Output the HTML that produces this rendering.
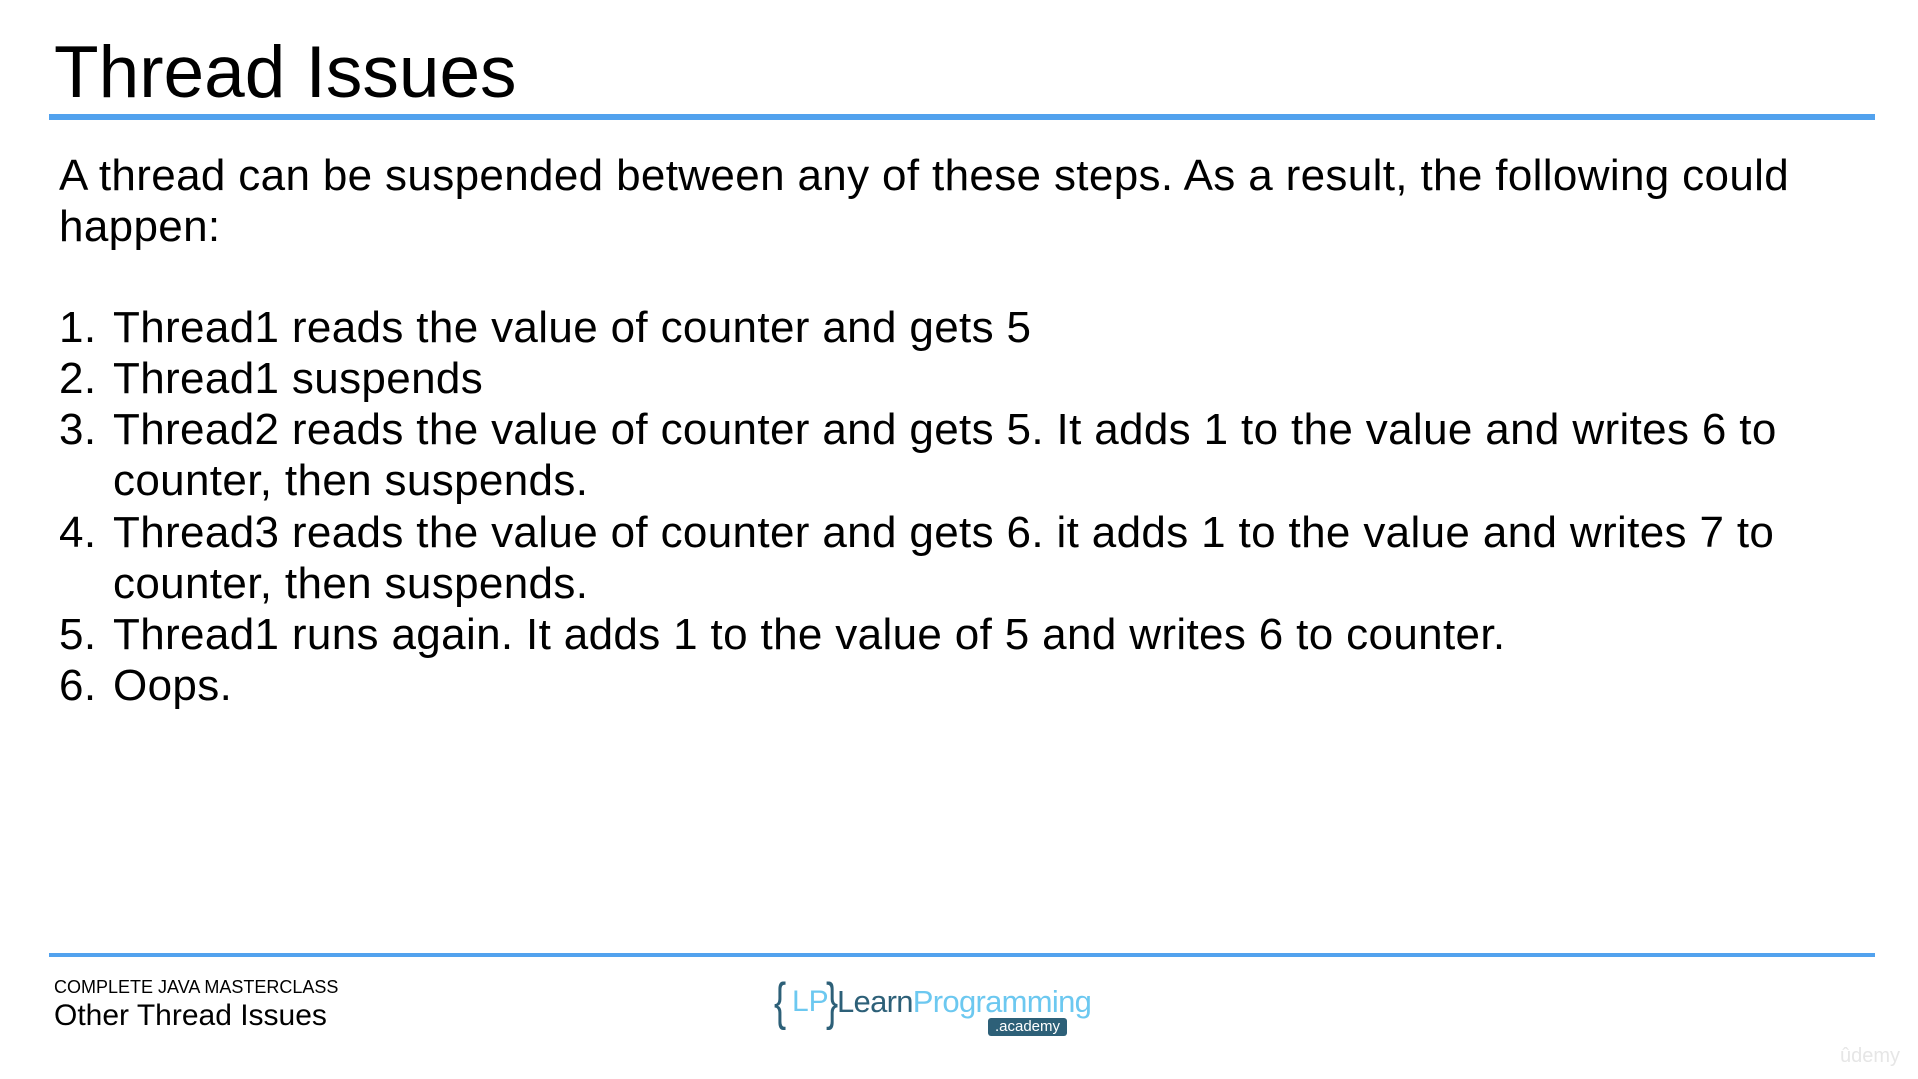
<!DOCTYPE html>
<html><head><meta charset="utf-8"><style>
html,body{margin:0;padding:0;background:#fff;}
body{width:1918px;height:1079px;position:relative;overflow:hidden;font-family:"Liberation Sans",sans-serif;color:#000;}
.a{position:absolute;white-space:nowrap;}
.line{line-height:51px;font-size:44px;letter-spacing:0.35px;}
</style></head><body>
<div class="a" style="left:54px;top:25px;font-size:73px;line-height:96px;">Thread Issues</div>
<div class="a" style="left:49px;top:114px;width:1826px;height:6px;background:#52a2ee;"></div>

<div class="a line" style="left:59px;top:150px;">A thread can be suspended between any of these steps. As a result, the following could</div>
<div class="a line" style="left:59px;top:201px;">happen:</div>

<div class="a line" style="left:59px;top:302px;">1.</div><div class="a line" style="left:113px;top:302px;">Thread1 reads the value of counter and gets 5</div>
<div class="a line" style="left:59px;top:353px;">2.</div><div class="a line" style="left:113px;top:353px;">Thread1 suspends</div>
<div class="a line" style="left:59px;top:404px;">3.</div><div class="a line" style="left:113px;top:404px;">Thread2 reads the value of counter and gets 5. It adds 1 to the value and writes 6 to</div>
<div class="a line" style="left:113px;top:455px;">counter, then suspends.</div>
<div class="a line" style="left:59px;top:507px;">4.</div><div class="a line" style="left:113px;top:507px;">Thread3 reads the value of counter and gets 6. it adds 1 to the value and writes 7 to</div>
<div class="a line" style="left:113px;top:558px;">counter, then suspends.</div>
<div class="a line" style="left:59px;top:609px;">5.</div><div class="a line" style="left:113px;top:609px;">Thread1 runs again. It adds 1 to the value of 5 and writes 6 to counter.</div>
<div class="a line" style="left:59px;top:660px;">6.</div><div class="a line" style="left:113px;top:660px;">Oops.</div>

<div class="a" style="left:49px;top:953px;width:1826px;height:4px;background:#52a2ee;"></div>
<div class="a" style="left:54px;top:976px;font-size:18px;line-height:22px;">COMPLETE JAVA MASTERCLASS</div>
<div class="a" style="left:54px;top:999px;font-size:30px;line-height:34px;">Other Thread Issues</div>

<div class="a" style="left:774px;top:972px;font-size:52px;line-height:60px;color:#2d6078;transform:scaleX(0.7);transform-origin:left;">{</div>
<div class="a" style="left:792px;top:985px;font-size:30px;line-height:34px;color:#6cc8f0;">LP</div>
<div class="a" style="left:826px;top:972px;font-size:52px;line-height:60px;color:#2d6078;transform:scaleX(0.7);transform-origin:left;">}</div>
<div class="a" style="left:837px;top:985px;font-size:31px;line-height:34px;letter-spacing:-0.7px;"><span style="color:#2d6078;">Learn</span><span style="color:#6cc8f0;">Programming</span></div>
<div class="a" style="left:988px;top:1018px;width:79px;height:18px;background:#2d6078;border-radius:3px;color:#fff;font-size:15px;line-height:17px;text-align:center;">.academy</div>

<div class="a" style="left:1840px;top:1045px;font-size:20px;color:#e6e6e6;">ûdemy</div>
</body></html>
